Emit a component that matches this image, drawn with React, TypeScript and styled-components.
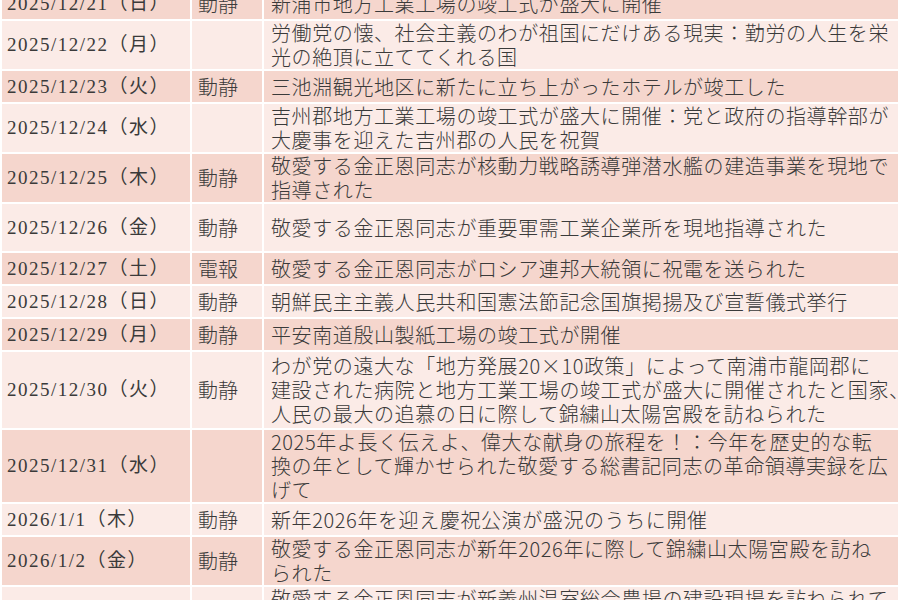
import styled, { createGlobalStyle } from 'styled-components';

const GlobalStyle = createGlobalStyle`
  html, body {
    margin: 0;
    padding: 0;
    background: #ffffff;
    overflow: hidden;
  }
`;

const Table = styled.table`
  width: 900px;
  margin-top: -14px;
  table-layout: fixed;
  border-collapse: separate;
  border-spacing: 2px;
  color: #3a3a3a;
`;

const Row = styled.tr<{ $tone: 'dark' | 'light' }>`
  background-color: ${({ $tone }) => ($tone === 'dark' ? '#f5d6cd' : '#fbebe7')};
`;

const Cell = styled.td<{ $h: number }>`
  height: ${({ $h }) => $h}px;
  padding: 0;
  vertical-align: middle;
  line-height: 24px;
  white-space: nowrap;
`;

const DateCell = styled(Cell)`
  padding-left: 5px;
  font-family: 'Liberation Serif', 'Noto Sans CJK JP', serif;
  font-size: 19px;
  letter-spacing: 1.5px;
`;

const KindCell = styled(Cell)`
  padding-left: 6px;
  font-family: 'Noto Sans CJK JP', sans-serif;
  font-size: 20px;
  font-weight: 300;
`;

const TitleCell = styled(Cell)`
  padding-left: 7px;
  font-family: 'Noto Sans CJK JP', sans-serif;
  font-size: 20px;
  font-weight: 300;
  letter-spacing: 0.6px;
`;

const Line = styled.span`
  display: block;
`;

interface IEntry {
  date: string;
  kind: string;
  lines: string[];
  h?: number;
}

const ENTRIES: IEntry[] = [
  { date: '2025/12/21（日）', kind: '動静', lines: ['新浦市地方工業工場の竣工式が盛大に開催'] },
  {
    date: '2025/12/22（月）',
    kind: '',
    lines: ['労働党の懐、社会主義のわが祖国にだけある現実：勤労の人生を栄', '光の絶頂に立ててくれる国'],
  },
  { date: '2025/12/23（火）', kind: '動静', lines: ['三池淵観光地区に新たに立ち上がったホテルが竣工した'] },
  {
    date: '2025/12/24（水）',
    kind: '',
    lines: ['吉州郡地方工業工場の竣工式が盛大に開催：党と政府の指導幹部が', '大慶事を迎えた吉州郡の人民を祝賀'],
  },
  {
    date: '2025/12/25（木）',
    kind: '動静',
    lines: ['敬愛する金正恩同志が核動力戦略誘導弾潜水艦の建造事業を現地で', '指導された'],
  },
  { date: '2025/12/26（金）', kind: '動静', lines: ['敬愛する金正恩同志が重要軍需工業企業所を現地指導された'], h: 47 },
  { date: '2025/12/27（土）', kind: '電報', lines: ['敬愛する金正恩同志がロシア連邦大統領に祝電を送られた'] },
  { date: '2025/12/28（日）', kind: '動静', lines: ['朝鮮民主主義人民共和国憲法節記念国旗掲揚及び宣誓儀式挙行'] },
  { date: '2025/12/29（月）', kind: '動静', lines: ['平安南道殷山製紙工場の竣工式が開催'] },
  {
    date: '2025/12/30（火）',
    kind: '動静',
    lines: [
      'わが党の遠大な「地方発展20×10政策」によって南浦市龍岡郡に',
      '建設された病院と地方工業工場の竣工式が盛大に開催されたと国家、',
      '人民の最大の追慕の日に際して錦繍山太陽宮殿を訪ねられた',
    ],
    h: 76,
  },
  {
    date: '2025/12/31（水）',
    kind: '',
    lines: [
      '2025年よ長く伝えよ、偉大な献身の旅程を！：今年を歴史的な転',
      '換の年として輝かせられた敬愛する総書記同志の革命領導実録を広',
      'げて',
    ],
    h: 70,
  },
  { date: '2026/1/1（木）', kind: '動静', lines: ['新年2026年を迎え慶祝公演が盛況のうちに開催'] },
  {
    date: '2026/1/2（金）',
    kind: '動静',
    lines: ['敬愛する金正恩同志が新年2026年に際して錦繍山太陽宮殿を訪ね', 'られた'],
  },
  {
    date: '2026/1/3（土）',
    kind: '動静',
    lines: ['敬愛する金正恩同志が新義州温室総合農場の建設現場を訪ねられて', '建設を現地で指導された'],
  },
];

const App = () => (
  <>
    <GlobalStyle />
    <Table>
      <colgroup>
        <col style={{ width: 188 }} />
        <col style={{ width: 70 }} />
        <col />
      </colgroup>
      <tbody>
        {ENTRIES.map(({ date, kind, lines, h }, i) => {
          const height = h ?? (lines.length > 1 ? lines.length * 24 : 31);
          return (
            <Row key={date} $tone={i % 2 === 0 ? 'dark' : 'light'}>
              <DateCell $h={height}>{date}</DateCell>
              <KindCell $h={height}>{kind}</KindCell>
              <TitleCell $h={height}>
                {lines.map((line) => (
                  <Line key={line}>{line}</Line>
                ))}
              </TitleCell>
            </Row>
          );
        })}
      </tbody>
    </Table>
  </>
);

export default App;
